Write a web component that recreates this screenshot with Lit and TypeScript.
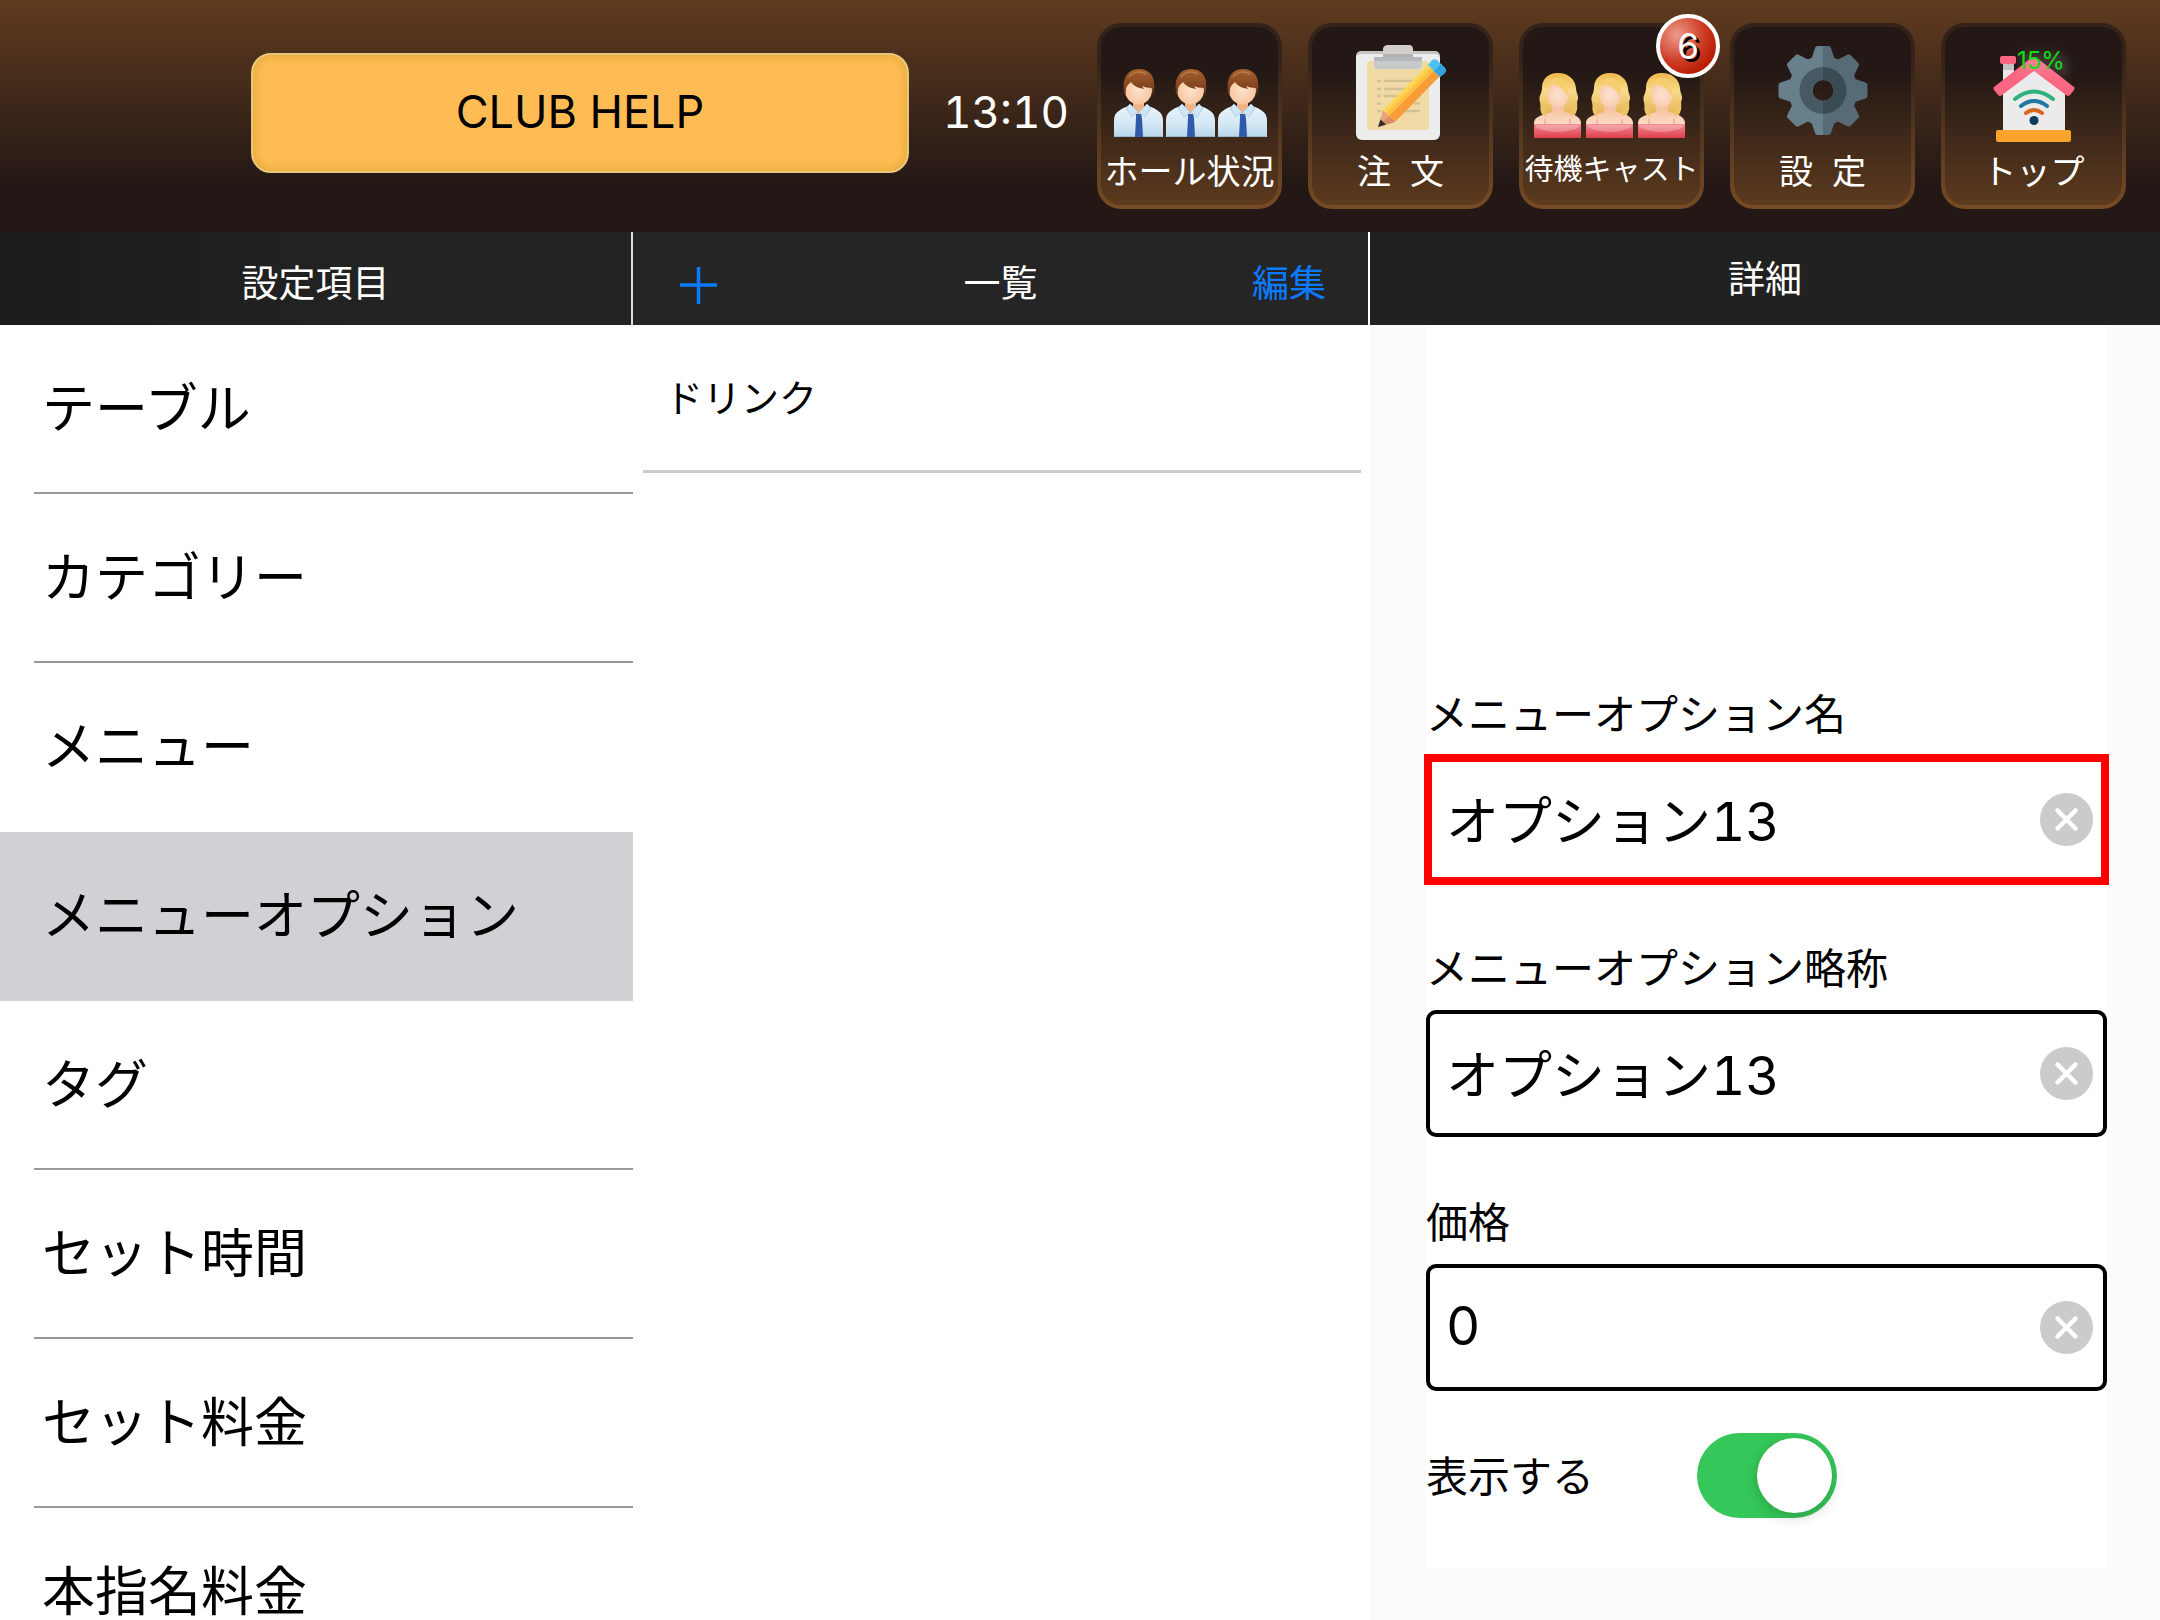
import { LitElement, html, svg, css, nothing } from "lit";
import { customElement, state } from "lit/decorators.js";
import { classMap } from "lit/directives/class-map.js";

const man = (i: number) => svg`
  <g transform="translate(${4 + i * 52} 29)">
    <path d="M19 30h11v10l-5 7-6-7z" fill="#eeb487"/>
    <path d="M0 68V51c0-8 7-11 14-14l10 8 11-8c7 3 14 6 14 14v17z" fill="url(#shirt)"/>
    <path d="M1 67.500h47" stroke="#9ab8cf" stroke-width="1"/>
    <path d="M16 35l-4 4 6 9 6-5zM33 35l4 4-6 9-6-5z" fill="#cfe4f5" stroke="#a9c8e2" stroke-width=".8"/>
    <path d="M22 45h5l1 4 1 19h-8l1-19z" fill="#2f5ba8"/>
    <ellipse cx="24.500" cy="21" rx="13.500" ry="14.500" fill="url(#face)"/>
    <path d="M11 27C7 12 12 0 25 0c13 0 18 11 14 27l-1-8c-4 0-8-1-10-2l2 3c-6-1-10-3-13-7-2 2-5 4-5 8z" fill="url(#hair)"/>
    <path d="M15 8C19 2 27 2 32 5" fill="none" stroke="#c48a5d" stroke-width="1.500" opacity=".7"/>
  </g>`;

const woman = (i: number) => svg`
  <g transform="translate(${2 + i * 52} 33)">
    <path d="M24 0C13 0 8 7 8 15c0 6-4 8-2 14 1 4 0 6 1 9 2 5 6 7 12 7h12c7 0 11-2 11-7 0-3 2-5 1-9 3-6-1-8-1-14C41 6 34 0 24 0z" fill="url(#blond)"/>
    <path d="M18 32h12v7c7 1 17 4 17 11v4H0v-4c0-7 11-9 18-11z" fill="url(#skin)"/>
    <ellipse cx="24" cy="22" rx="10.500" ry="13" fill="url(#face)"/>
    <path d="M9 28c3 5 1 10 3 16-5-2-6-6-5-11zM40 28c-3 5-3 9-4 15 6-1 8-6 7-11z" fill="#edc365"/>
    <path d="M14 22c-2-6-1-9 2-13 6 4 13 5 18 14C37 11 31 4 23 5c-8 0-12 8-9 17z" fill="#f6cf70"/>
    <path d="M11 46v6M36 46v6" stroke="#ef8f94" stroke-width="1"/>
    <path d="M0 51h47v14H0z" fill="url(#dress)"/>
    <path d="M1 52h45c-3 9-42 9-45 0z" fill="#fff" opacity=".25"/>
  </g>`;

const hallIcon = svg`
  <defs>
    <linearGradient id="shirt" x2="0" y2="1"><stop offset="0" stop-color="#e8f4fb"/><stop offset=".6" stop-color="#d3e7f4"/><stop offset="1" stop-color="#b7d6ea"/></linearGradient>
    <radialGradient id="face"><stop offset="0" stop-color="#fde5d0"/><stop offset="1" stop-color="#f6c6a0"/></radialGradient>
    <linearGradient id="hair" x2="0" y2="1"><stop offset="0" stop-color="#a7622f"/><stop offset="1" stop-color="#6e3517"/></linearGradient>
  </defs>
  ${[0, 1, 2].map(man)}`;

const castIcon = svg`
  <defs>
    <radialGradient id="face"><stop offset="0" stop-color="#fde3d2"/><stop offset="1" stop-color="#f8ccae"/></radialGradient>
    <linearGradient id="blond" x2="0" y2="1"><stop offset="0" stop-color="#f0b94b"/><stop offset=".4" stop-color="#f9da8b"/><stop offset="1" stop-color="#e3b052"/></linearGradient>
    <linearGradient id="skin" x2="0" y2="1"><stop offset="0" stop-color="#f4bd97"/><stop offset="1" stop-color="#fde0cc"/></linearGradient>
    <linearGradient id="dress" x2="0" y2="1"><stop offset="0" stop-color="#f48b93"/><stop offset="1" stop-color="#dd3f4c"/></linearGradient>
  </defs>
  ${[0, 1, 2].map(woman)}`;

const orderIcon = svg`
  <rect x="35" y="11" width="84" height="89" rx="6" fill="#ededed"/>
  <path d="M35 17c0-4 2-6 6-6h72c4 0 6 2 6 6-1-2-3-3-6-3H41c-3 0-5 1-6 3z" fill="#c4c4c4"/>
  <rect x="46" y="21" width="62" height="69" rx="3" fill="#f0dba6"/>
  <path d="M67 5h21c3 0 4 2 4 4v8H62V9c0-2 2-4 5-4z" fill="#d3cdcb"/>
  <path d="M53 17h48v8c0 2-1 4-4 4H57c-3 0-4-2-4-4z" fill="#c8c9cb"/>
  <path d="M53 17h48v4H53z" fill="#b3b8bb"/>
  <path d="M62 14h30v3H62z" fill="#b5b0ae"/>
  <path d="M56 41h4m3 0h28M56 49h4m3 0h22M56 56h4m3 0h15M56 63.500h4m33 0h6M56 71h4m22 0h17" stroke="#d3c193" stroke-width="2.500"/>
  <path d="M107 25l-45 45 6 6 45-45z" fill="#ffd551"/>
  <path d="M110 28l-45 45 4.500 4.500L115 32z" fill="#fdc046"/>
  <path d="M113 31L68 76l6 6 45-46z" fill="#f99c38"/>
  <path d="M62 70l-5 17 17-5z" fill="#e5a27d"/>
  <path d="M68 76l-11 11 17-5z" fill="#d88d6b"/>
  <path d="M59.500 79.500L57 87l8-2.500z" fill="#332b2b"/>
  <path d="M107 25l4-5c2-1 3-1 5 0l8 8c1 2 1 3 0 5l-5 4z" fill="#4fc3f0"/>
  <path d="M113 31l7-7 4 4c1 2 1 3 0 5l-5 4z" fill="#35a4dc"/>`;

const gearShape = svg`
  <circle cx="80" cy="50.500" r="22.500" fill="none" stroke-width="24" stroke="currentColor"/>
  ${[0, 45, 90, 135, 180, 225, 270, 315].map(
    (a) => svg`<path transform="rotate(${a} 80 50.500)" d="M68 20l4-12q.5-2 2.500-2h11q2 0 2.500 2l4 12z" fill="currentColor"/>`
  )}`;

const gearIcon = svg`
  <defs>
    <clipPath id="left"><path d="M0 0h80v104H0z"/></clipPath>
    <clipPath id="right"><path d="M80 0h80v104H80z"/></clipPath>
  </defs>
  <g clip-path="url(#left)" color="#68808b">${gearShape}<circle cx="80" cy="50.500" r="17" fill="none" stroke="#475a63" stroke-width="13"/></g>
  <g clip-path="url(#right)" color="#566b76">${gearShape}<circle cx="80" cy="50.500" r="17" fill="none" stroke="#3b4b53" stroke-width="13"/></g>`;

const topIcon = svg`
  <path d="M49 22h11v22H49z" fill="#e9e9ec"/><path d="M49 24h11v6H49z" fill="#c3c1c4"/>
  <rect x="46" y="16" width="16" height="8" rx="2" fill="#f9647f"/>
  <path d="M80 27l31 24v40H49V51z" fill="#ebebec"/>
  <path d="M77 18q3-2 6 0l37 29q1 1 0 3l-4 5q-2 2-4 0L80 31 48 55q-2 2-4 0l-4-5q-1-2 0-3z" fill="#fb6782"/>
  <rect x="42" y="90" width="75" height="12" rx="2" fill="#fba32a"/>
  <g fill="none" stroke-width="4" stroke-linecap="round">
    <path d="M61 59q19-15 38 0" stroke="#2eb37c"/>
    <path d="M67 66q13-10 26 0" stroke="#1f79a2"/>
    <path d="M72 73q8-6 16 0" stroke="#d9661f"/>
  </g>
  <circle cx="80" cy="80.500" r="4.500" fill="#0c3a5b"/>`;

interface Tile { label: string; icon: unknown; small?: boolean; badge?: string; level?: string }

const TILES: Tile[] = [
  { label: "ホール状況", icon: hallIcon },
  { label: "注  文", icon: orderIcon },
  { label: "待機キャスト", icon: castIcon, small: true, badge: "6" },
  { label: "設  定", icon: gearIcon },
  { label: "トップ", icon: topIcon, level: "15%" },
];

const SECTIONS = [
  "テーブル", "カテゴリー", "メニュー", "メニューオプション", "タグ",
  "セット時間", "セット料金", "本指名料金",
];

const base = css`
  *, *::before { box-sizing: border-box; }
  button, input { font: inherit; color: inherit; margin: 0; }
  button { border: 0; padding: 0; background: none; cursor: pointer; }
`;

@customElement("nav-tile")
class NavTile extends LitElement {
  static properties = { tile: { attribute: false } };
  declare tile: Tile;

  static styles = [base, css`
    :host { display: block; flex: none; }
    .tile {
      position: relative;
      display: flex;
      flex-direction: column;
      align-items: center;
      gap: 8px;
      width: 185px;
      height: 186px;
      padding-top: 13px;
      border: 4px solid transparent;
      border-radius: 24px;
      color: #fff;
      background:
        linear-gradient(#231815 25%, #5c3a1e) padding-box,
        linear-gradient(#34231a 20%, #774b25) border-box;
    }
    .icon { display: block; width: 160px; height: 104px; }
    .label { font-size: 34px; line-height: 40px; white-space: pre; }
    .small { font-size: 29px; line-height: 36px; }
    .badge {
      position: absolute;
      top: -13px;
      right: -20px;
      width: 64px;
      height: 64px;
      border: 4px solid #fff;
      border-radius: 50%;
      background: radial-gradient(circle at 30% 30%, #ee9c8c, #cc3a22 50%, #b81d05 75%);
      font-size: 35px;
      line-height: 56px;
      text-align: center;
      text-shadow: 3px 3px 0 #000;
    }
    .level {
      position: absolute;
      top: 20px;
      left: 72px;
      font-size: 24px;
      line-height: 28px;
      color: #12dc12;
      text-shadow: 4px 4px 12px #fff8;
    }
  `];

  render() {
    const t = this.tile;
    return html`
      <button class="tile" type="button">
        <svg class="icon" viewBox="0 0 160 104" aria-hidden="true">${t.icon}</svg>
        <span class=${classMap({ label: true, small: !!t.small })}>${t.label}</span>
        ${t.badge ? html`<span class="badge">${t.badge}</span>` : nothing}
        ${t.level ? html`<span class="level">${t.level}</span>` : nothing}
      </button>`;
  }
}

@customElement("clearable-field")
class ClearableField extends LitElement {
  static properties = {
    label: {}, value: {}, marked: { type: Boolean },
  };
  declare label: string;
  declare value: string;
  declare marked: boolean;

  static styles = [base, css`
    :host { display: block; min-width: 0; }
    .label { display: block; margin-bottom: 20px; font-size: 42px; line-height: 42px; white-space: nowrap; }
    .box {
      display: flex;
      align-items: center;
      height: 127px;
      padding: 0 10px 0 16px;
      border: 4px solid #000;
      border-radius: 10px;
      background: #fff;
    }
    .marked { border-color: transparent; border-radius: 0; outline: 8px solid #f00; outline-offset: -6px; }
    .input {
      flex: 1;
      min-width: 0;
      height: 76px;
      padding: 0 0 4px;
      border: 0;
      outline: 0;
      background: none;
      font-size: 53px;
      font-variant-numeric: tabular-nums;
    }
    .clear { flex: none; width: 53px; height: 53px; }
    .cross { display: block; width: 100%; height: 100%; }
  `];

  render() {
    return html`
      <label class="label" for="input">${this.label}</label>
      <div class=${classMap({ box: true, marked: this.marked })}>
        <input class="input" id="input" type="text" .value=${this.value}
          @input=${(e: Event) => (this.value = (e.target as HTMLInputElement).value)}>
        <button class="clear" type="button" aria-label="クリア" @click=${() => (this.value = "")}>
          <svg class="cross" viewBox="0 0 53 53" aria-hidden="true">
            <circle cx="26.500" cy="26.500" r="26.500" fill="#cbcbcb"/>
            <path d="M17.500 17.500l18 18m0-18l-18 18" stroke="#fff" stroke-width="4.500" stroke-linecap="round"/>
          </svg>
        </button>
      </div>`;
  }
}

@customElement("app-root")
class AppRoot extends LitElement {
  @state() private selected = 3;

  static styles = [base, css`
    :host {
      display: flex;
      flex-direction: column;
      height: 100vh;
      overflow: hidden;
      background: #fff;
      color: #000;
      font-family: Inter, "Noto Sans CJK JP", sans-serif;
    }
    .header {
      flex: none;
      display: flex;
      gap: 26px;
      padding: 23px 34px 23px 251px;
      background: linear-gradient(#603b1f, #231815 80%);
    }
    .status { flex: 1; display: flex; align-items: center; padding-bottom: 6px; font-size: 45px; }
    .club {
      flex: 1;
      height: 120px;
      padding-bottom: 3px;
      border: 2px solid #e6c67c;
      border-radius: 20px;
      background: #ffbc55;
      box-shadow: inset 0 0 12px #d9a72f;
      color: #000;
    }
    .time {
      width: 188px;
      margin-right: -26px;
      padding: 0 0 2px 6px;
      text-align: center;
      color: #fff;
      font-size: 44px;
      font-variant-numeric: tabular-nums;
    }
    .columns { flex: 1; min-height: 0; display: grid; grid-template-columns: 633fr 737fr 790fr; }
    .column { display: flex; flex-direction: column; min-width: 0; min-height: 0; }
    .bar {
      flex: none;
      display: grid;
      grid-template-columns: 1fr auto 1fr;
      align-items: center;
      height: 93px;
      padding: 10px 42px 0;
      border-right: 2px solid #fff;
      background: #252525;
      color: #fff;
      font-size: 37px;
      line-height: 44px;
    }
    .bar-first { border-color: #ddd; background: linear-gradient(90deg, #1c1c1c, #232323 60%); }
    .bar-last { padding-top: 2px; border: 0; background: #212121; }
    .title { grid-column: 2; margin: 0; font-size: inherit; font-weight: 400; }
    .action { color: #0a7aff; }
    .add { justify-self: start; }
    .edit { justify-self: end; }
    .plus { display: block; width: 44px; height: 44px; }
    .list { list-style: none; margin: 0; padding: 0; overflow-y: auto; scrollbar-width: none; }
    .section {
      display: block;
      width: 100%;
      height: 169px;
      padding: 0 0 2px 42px;
      text-align: left;
      font-size: 53px;
      line-height: 64px;
      background: linear-gradient(#999, #999) right bottom / calc(100% - 34px) 2px no-repeat;
    }
    .before { background: none; }
    .chosen { background: #d1d0d5; }
    .entries { padding: 0 9px 0 10px; }
    .entry {
      display: block;
      width: 100%;
      height: 148px;
      padding: 0 0 4px 22px;
      border-bottom: 3px solid #ccc;
      text-align: left;
      font-size: 38px;
    }
    .detail { background: #fbfbfb; }
    .form { margin: 0 53px 0 56px; padding: 369px 0 51px; background: #fff; }
    .fields { display: grid; grid-template-columns: minmax(0, 1fr); gap: 65px; }
    .visible { display: grid; grid-template-columns: 1fr auto 1fr; align-items: center; margin-top: 42px; font-size: 42px; }
    .caption { padding-bottom: 4px; }
    .switch {
      appearance: none;
      display: flex;
      justify-content: flex-start;
      width: 140px;
      height: 85px;
      padding: 5px;
      border-radius: 43px;
      background: #ddd;
    }
    .switch:checked { justify-content: flex-end; background: #35c759; }
    .switch::before { content: ""; width: 75px; height: 75px; border-radius: 50%; background: #fff; box-shadow: 0 4px 14px #0003; }
  `];

  render() {
    return html`
      <header class="header">
        <div class="status">
          <button class="club" type="button">CLUB HELP</button>
          <time class="time">13:10</time>
        </div>
        ${TILES.map((t) => html`<nav-tile .tile=${t}></nav-tile>`)}
      </header>
      <main class="columns">
        <section class="column">
          <div class="bar bar-first"><h2 class="title">設定項目</h2></div>
          <ul class="list">
            ${SECTIONS.map((s, i) => html`
              <li>
                <button type="button" class=${classMap({
                  section: true,
                  before: i === this.selected - 1,
                  chosen: i === this.selected,
                })} @click=${() => (this.selected = i)}>${s}</button>
              </li>`)}
          </ul>
        </section>
        <section class="column">
          <div class="bar">
            <button class="action add" type="button" aria-label="追加">
              <svg class="plus" viewBox="0 0 44 44" aria-hidden="true">
                <path d="M5 23h37M23.500 5v37" stroke="currentColor" stroke-width="3.500"/>
              </svg>
            </button>
            <h2 class="title">一覧</h2>
            <button class="action edit" type="button">編集</button>
          </div>
          <ul class="list entries">
            <li><button class="entry" type="button">ドリンク</button></li>
          </ul>
        </section>
        <section class="column detail">
          <div class="bar bar-last"><h2 class="title">詳細</h2></div>
          <form class="form">
            <div class="fields">
              <clearable-field label="メニューオプション名" value="オプション13" marked></clearable-field>
              <clearable-field label="メニューオプション略称" value="オプション13"></clearable-field>
              <clearable-field label="価格" value="0"></clearable-field>
            </div>
            <div class="visible">
              <label class="caption" for="visible">表示する</label>
              <input class="switch" id="visible" type="checkbox" role="switch" checked>
            </div>
          </form>
        </section>
      </main>`;
  }
}
